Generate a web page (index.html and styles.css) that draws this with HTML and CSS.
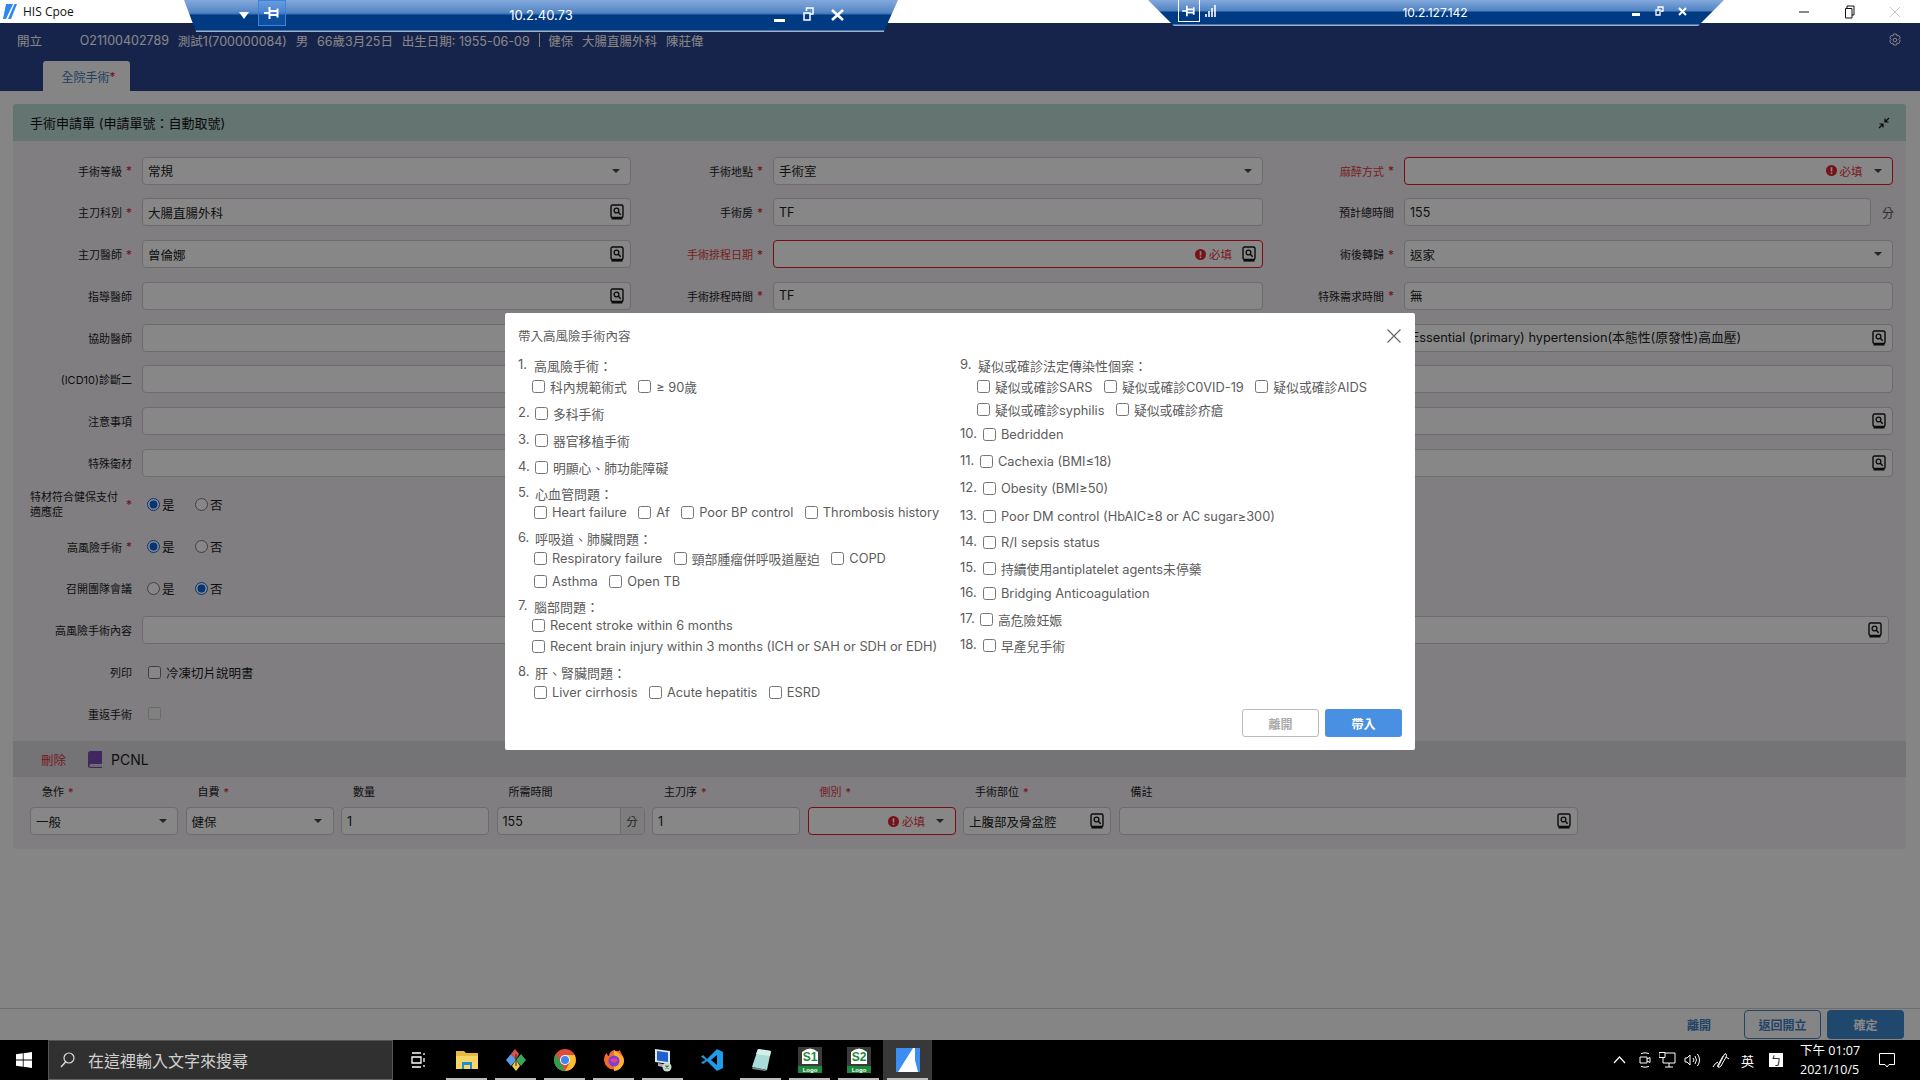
FILE: index.html
```html
<!DOCTYPE html>
<html lang="zh-Hant">
<head>
	<meta charset="UTF-8">
	<title>HIS Cpoe</title>
	<link rel="stylesheet" href="styles.css">
</head>
<body>
<svg class="defs" width="0" height="0">
	<symbol id="lookup" viewBox="0 0 14 16">
		<rect x="1" y="1" width="12" height="12.5" rx="1.5" fill="none" stroke="#151515" stroke-width="1.4"/>
		<path d="M1.5 14.8h11" stroke="#151515" stroke-width="1.6"/>
		<circle cx="6.5" cy="6.5" r="2.4" fill="none" stroke="#151515" stroke-width="1.3"/>
		<path d="M8.3 8.3l2.4 2.4" stroke="#151515" stroke-width="1.5"/>
	</symbol>
	<symbol id="pin" viewBox="0 0 16 14">
		<path d="M0 7h6M5.500 1v12M5 5h9M5 9h9M13.500 2.500v9" fill="none" stroke="#fff" stroke-width="2"/>
	</symbol>
	<symbol id="must" viewBox="0 0 12 12">
		<circle cx="6" cy="6" r="6" fill="#e0232e"/>
		<path d="M6 2.500v4.500M6 8.300v1.400" stroke="#fff" stroke-width="1.800"/>
	</symbol>
</svg>

<div class="titlebar">
	<svg class="app-logo" width="14" height="15" viewBox="0 0 14 15"><path d="M3 0h11L8 15H0z" fill="#2e86f0"/><path d="M10 0h1.500L5 15H3z" fill="#fff"/></svg>
	<span class="app-name">HIS Cpoe</span>
	<div class="win-btns">
		<svg width="12" height="12" viewBox="0 0 12 12"><path d="M1 6h10" stroke="#111"/></svg>
		<svg width="12" height="14" viewBox="0 0 12 14"><path d="M3 3.500V1h7v9H8M1.500 3.500h6.500v9.500H1.500z" fill="none" stroke="#111"/></svg>
		<svg width="12" height="12" viewBox="0 0 12 12"><path d="M1 1l10 10M11 1L1 11" stroke="#c9c9c9"/></svg>
	</div>
</div>

<div class="main">
	<div class="top">
		<div class="patient">
			<span class="open-tag">開立</span>
			<span>O21100402789</span><span>測試1(700000084)</span><span>男</span><span>66歲3月25日</span><span>出生日期: 1955-06-09</span><span class="sep"></span><span>健保</span><span>大腸直腸外科</span><span>陳莊偉</span>
			<svg class="gear" width="14" height="15" viewBox="0 0 14 15"><path d="M5.500 1h3l.5 2 1.800-.6 1.500 2.600-1.400 1.500 1.400 1.500-1.500 2.600-1.800-.6-.5 2H5.500l-.5-2-1.800.6L1.700 8l1.400-1.500L1.700 5l1.500-2.600L5 3z" fill="none" stroke="#fff"/><circle cx="7" cy="7" r="1.800" fill="none" stroke="#fff"/></svg>
		</div>
		<div class="tab">全院手術<em>*</em></div>
	</div>

	<div class="page">
		<div class="panel">
			<div class="panel-head">
				<span>手術申請單 (申請單號：自動取號)</span>
				<svg class="shrink" width="12" height="12" viewBox="0 0 12 12"><path d="M11 1L7.500 4.500M7 1.500V5h3.500M1 11l3.500-3.500M1.500 7H5v3.500" fill="none" stroke="#111" stroke-width="1.200"/></svg>
			</div>

			<div class="form">
				<label class="lb req">手術等級</label>
				<div class="field"><span class="val">常規</span><i class="arrow"></i></div>
				<label class="lb req">手術地點</label>
				<div class="field"><span class="val">手術室</span><i class="arrow"></i></div>
				<label class="lb req bad">麻醉方式</label>
				<div class="field error"><span class="must"><svg width="11" height="11"><use href="#must"/></svg>必填</span><i class="arrow"></i></div>

				<label class="lb req">主刀科別</label>
				<div class="field"><span class="val">大腸直腸外科</span><svg class="look"><use href="#lookup"/></svg></div>
				<label class="lb req">手術房</label>
				<div class="field"><span class="val">TF</span></div>
				<label class="lb">預計總時間</label>
				<div class="with-unit"><div class="field"><span class="val">155</span></div><span class="unit">分</span></div>

				<label class="lb req">主刀醫師</label>
				<div class="field"><span class="val">曾倫娜</span><svg class="look"><use href="#lookup"/></svg></div>
				<label class="lb req bad">手術排程日期</label>
				<div class="field error"><span class="must"><svg width="11" height="11"><use href="#must"/></svg>必填</span><svg class="look"><use href="#lookup"/></svg></div>
				<label class="lb req">術後轉歸</label>
				<div class="field"><span class="val">返家</span><i class="arrow"></i></div>

				<label class="lb">指導醫師</label>
				<div class="field"><svg class="look"><use href="#lookup"/></svg></div>
				<label class="lb req">手術排程時間</label>
				<div class="field"><span class="val">TF</span></div>
				<label class="lb req">特殊需求時間</label>
				<div class="field"><span class="val">無</span></div>

				<label class="lb">協助醫師</label>
				<div class="field"></div>
				<label class="lb"></label>
				<div class="field"></div>
				<label class="lb">(ICD10)診斷一</label>
				<div class="field"><span class="val en">Essential (primary) hypertension(本態性(原發性)高血壓)</span><svg class="look"><use href="#lookup"/></svg></div>

				<label class="lb">(ICD10)診斷二</label>
				<div class="field wide"></div>

				<label class="lb">注意事項</label>
				<div class="field wide"><svg class="look"><use href="#lookup"/></svg></div>

				<label class="lb">特殊衛材</label>
				<div class="field wide"><svg class="look"><use href="#lookup"/></svg></div>

				<label class="lb req two"><span>特材符合健保支付適應症</span></label>
				<div class="opts">
					<label class="opt"><input type="radio" name="r1" checked>是</label>
					<label class="opt"><input type="radio" name="r1">否</label>
				</div>
				<span class="rest"></span>

				<label class="lb req">高風險手術</label>
				<div class="opts">
					<label class="opt"><input type="radio" name="r2" checked>是</label>
					<label class="opt"><input type="radio" name="r2">否</label>
				</div>
				<span class="rest"></span>

				<label class="lb">召開團隊會議</label>
				<div class="opts">
					<label class="opt"><input type="radio" name="r3">是</label>
					<label class="opt"><input type="radio" name="r3" checked>否</label>
				</div>
				<span class="rest"></span>

				<label class="lb">高風險手術內容</label>
				<div class="field wide inset"><svg class="look"><use href="#lookup"/></svg></div>

				<label class="lb">列印</label>
				<div class="opts box"><label class="opt print"><input type="checkbox">冷凍切片說明書</label></div>
				<span class="rest"></span>

				<label class="lb">重返手術</label>
				<div class="opts box"><input type="checkbox" disabled></div>
				<span class="rest"></span>
			</div>

			<div class="item-bar">
				<span class="del">刪除</span>
				<svg class="book" width="14" height="17" viewBox="0 0 14 17"><path d="M2.500 0H14v13H3a1.500 1.500 0 0 0 0 3h11v1H2.500A2.500 2.500 0 0 1 0 14.500v-12A2.500 2.500 0 0 1 2.500 0z" fill="#7a4bb5"/><path d="M3 13.500h11V16H3a1.300 1.300 0 0 1 0-2.500z" fill="#c9c9d2"/></svg>
				<span class="item-name">PCNL</span>
			</div>

			<div class="item-row">
				<div class="cell"><span class="cap">急作<em>*</em></span><div class="field"><span class="val">一般</span><i class="arrow"></i></div></div>
				<div class="cell"><span class="cap">自費<em>*</em></span><div class="field"><span class="val">健保</span><i class="arrow"></i></div></div>
				<div class="cell"><span class="cap">數量</span><div class="field"><span class="val">1</span></div></div>
				<div class="cell"><span class="cap">所需時間</span><div class="field addon-wrap"><span class="val">155</span><span class="addon">分</span></div></div>
				<div class="cell"><span class="cap">主刀序<em>*</em></span><div class="field"><span class="val">1</span></div></div>
				<div class="cell"><span class="cap bad">側別<em>*</em></span><div class="field error"><span class="must"><svg width="11" height="11"><use href="#must"/></svg>必填</span><i class="arrow"></i></div></div>
				<div class="cell"><span class="cap">手術部位<em>*</em></span><div class="field"><span class="val">上腹部及骨盆腔</span><svg class="look"><use href="#lookup"/></svg></div></div>
				<div class="cell"><span class="cap">備註</span><div class="field"><svg class="look"><use href="#lookup"/></svg></div></div>
			</div>
		</div>
	</div>

	<div class="actions">
		<span class="link">離開</span>
		<button class="btn-line">返回開立</button>
		<button class="btn-solid">確定</button>
	</div>

	<div class="mask"></div>

	<div class="modal">
		<div class="modal-title">帶入高風險手術內容</div>
		<svg class="modal-x" width="14" height="14" viewBox="0 0 14 14"><path d="M.5.500l13 13M13.500.500l-13 13" stroke="#666" stroke-width="1.200"/></svg>
		<div class="modal-cols">
			<div class="col-l">
				<div class="ln"><b class="no">1.</b><span>高風險手術：</span></div>
				<div class="ln sub mt3 in1"><label class="ck"><input type="checkbox">科內規範術式</label><label class="ck"><input type="checkbox">≥ 90歲</label></div>
				<div class="ln mt9"><b class="no">2.</b><label class="ck in2"><input type="checkbox">多科手術</label></div>
				<div class="ln mt9"><b class="no">3.</b><label class="ck in2"><input type="checkbox">器官移植手術</label></div>
				<div class="ln mt9"><b class="no">4.</b><label class="ck in2"><input type="checkbox">明顯心、肺功能障礙</label></div>
				<div class="ln mt8"><b class="no">5.</b><span class="in2">心血管問題：</span></div>
				<div class="ln sub mt1 in2"><label class="ck"><input type="checkbox">Heart failure</label><label class="ck"><input type="checkbox">Af</label><label class="ck"><input type="checkbox">Poor BP control</label><label class="ck"><input type="checkbox">Thrombosis history</label></div>
				<div class="ln mt8"><b class="no">6.</b><span class="in2">呼吸道、肺臟問題：</span></div>
				<div class="ln sub mt2 in2"><label class="ck"><input type="checkbox">Respiratory failure</label><label class="ck"><input type="checkbox">頸部腫瘤併呼吸道壓迫</label><label class="ck"><input type="checkbox">COPD</label></div>
				<div class="ln sub mt5 in2"><label class="ck"><input type="checkbox">Asthma</label><label class="ck"><input type="checkbox">Open TB</label></div>
				<div class="ln mt7"><b class="no">7.</b><span>腦部問題：</span></div>
				<div class="ln sub mt1 in1"><label class="ck"><input type="checkbox">Recent stroke within 6 months</label></div>
				<div class="ln sub mt3 in1"><label class="ck"><input type="checkbox">Recent brain injury within 3 months (ICH or SAH or SDH or EDH)</label></div>
				<div class="ln mt8"><b class="no">8.</b><span class="in2">肝、腎臟問題：</span></div>
				<div class="ln sub mt2 in2"><label class="ck"><input type="checkbox">Liver cirrhosis</label><label class="ck"><input type="checkbox">Acute hepatitis</label><label class="ck"><input type="checkbox">ESRD</label></div>
			</div>
			<div class="col-r">
				<div class="ln"><b class="no head">9.</b><span>疑似或確診法定傳染性個案：</span></div>
				<div class="ln sub mt3 in3"><label class="ck"><input type="checkbox">疑似或確診SARS</label><label class="ck"><input type="checkbox">疑似或確診C0VID-19</label><label class="ck"><input type="checkbox">疑似或確診AIDS</label></div>
				<div class="ln sub mt5 in3"><label class="ck"><input type="checkbox">疑似或確診syphilis</label><label class="ck"><input type="checkbox">疑似或確診疥瘡</label></div>
				<div class="ln mt7"><b class="no">10.</b><label class="ck"><input type="checkbox">Bedridden</label></div>
				<div class="ln mt9"><b class="no tight">11.</b><label class="ck"><input type="checkbox">Cachexia (BMI≤18)</label></div>
				<div class="ln mt9"><b class="no">12.</b><label class="ck"><input type="checkbox">Obesity (BMI≥50)</label></div>
				<div class="ln mt10"><b class="no">13.</b><label class="ck"><input type="checkbox">Poor DM control (HbAIC≥8 or AC sugar≥300)</label></div>
				<div class="ln mt8"><b class="no">14.</b><label class="ck"><input type="checkbox">R/I sepsis status</label></div>
				<div class="ln mt8"><b class="no">15.</b><label class="ck"><input type="checkbox">持續使用antiplatelet agents未停藥</label></div>
				<div class="ln mt7"><b class="no">16.</b><label class="ck"><input type="checkbox">Bridging Anticoagulation</label></div>
				<div class="ln mt8"><b class="no tight">17.</b><label class="ck"><input type="checkbox">高危險妊娠</label></div>
				<div class="ln mt8"><b class="no">18.</b><label class="ck"><input type="checkbox">早產兒手術</label></div>
			</div>
		</div>
		<div class="modal-foot">
			<button class="m-close">離開</button>
			<button class="m-ok">帶入</button>
		</div>
	</div>
</div>

<!-- remote desktop connection bars -->
<div class="rdp rdp1">
	<svg class="rdp-arrow" width="10" height="7" viewBox="0 0 10 7"><path d="M0 0h10L5 7z" fill="#fff"/></svg>
	<span class="rdp-pin"><svg width="16" height="14"><use href="#pin"/></svg></span>
	<span class="rdp-ip">10.2.40.73</span>
	<svg class="rdp-min" width="11" height="3"><path d="M0 1.500h11" stroke="#fff" stroke-width="3"/></svg>
	<svg class="rdp-max" width="11" height="14" viewBox="0 0 11 14"><path d="M3.500 4V1h6.500v6H7M1 6h6v7H1z" fill="none" stroke="#fff" stroke-width="1.500"/></svg>
	<svg class="rdp-x" width="13" height="12" viewBox="0 0 13 12"><path d="M1 1l11 10M12 1L1 11" stroke="#fff" stroke-width="2.600"/></svg>
</div>
<div class="rdp rdp2">
	<span class="rdp-pin"><svg width="14" height="12"><use href="#pin"/></svg></span>
	<svg class="rdp-signal" width="12" height="12" viewBox="0 0 12 12"><path d="M1 12V9M4 12V6M7 12V3M10 12V0" stroke="#fff" stroke-width="1.600"/></svg>
	<span class="rdp-ip">10.2.127.142</span>
	<svg class="rdp-min" width="8" height="3"><path d="M0 1.500h8" stroke="#fff" stroke-width="3"/></svg>
	<svg class="rdp-max" width="9" height="10" viewBox="0 0 9 10"><path d="M3 3V1h5v4H6M1 4h4v5H1z" fill="none" stroke="#fff" stroke-width="1.300"/></svg>
	<svg class="rdp-x" width="9" height="9" viewBox="0 0 9 9"><path d="M1 1l7 7M8 1L1 8" stroke="#fff" stroke-width="2"/></svg>
</div>

<div class="taskbar">
	<div class="start"><svg width="16" height="16" viewBox="0 0 16 16"><path d="M0 2.300l6.800-1v6.300H0zM7.600 1.200L16 0v7.600H7.600zM0 8.400h6.800v6.300L0 13.700zM7.600 8.400H16V16l-8.400-1.200z" fill="#fff"/></svg></div>
	<div class="search">
		<svg width="15" height="16" viewBox="0 0 15 16"><circle cx="9" cy="6" r="5" fill="none" stroke="#ddd" stroke-width="1.200"/><path d="M5.500 10L1 15" stroke="#ddd" stroke-width="1.400"/></svg>
		<span>在這裡輸入文字來搜尋</span>
	</div>
	<div class="tasks">
		<div class="task"><svg width="16" height="16" viewBox="0 0 16 16"><path d="M2 1h9M2 15h9M2 5h9v6H2zM14 1v2M14 6v4M14 13v2" fill="none" stroke="#fff" stroke-width="1.300"/></svg></div>
		<div class="task run"><svg width="22" height="20" viewBox="0 0 22 20"><path d="M0 1h8l2 2h12v16H0z" fill="#e8b83f"/><path d="M0 6h22v13H0z" fill="#fbd564"/><path d="M6 12h10v7h-2v-4H8v4H6z" fill="#1c8fd6"/></svg></div>
		<div class="task run"><svg width="22" height="24" viewBox="0 0 22 24"><path d="M11 12L6 6l4-5 4 5z" fill="#d9534f"/><path d="M11 12l-5 6-5-6 5-6z" fill="#5b9be8"/><path d="M11 12l5-6 5 6-5 6z" fill="#3ba55d"/><path d="M11 12l4 6-4 5-4-5z" fill="#f2cc47"/><path d="M11 6v12" stroke="#222"/></svg></div>
		<div class="task run"><svg width="22" height="22" viewBox="0 0 22 22"><circle cx="11" cy="11" r="11" fill="#dd4b3e"/><path d="M11 6h9.600A11 11 0 0 1 11 22l4.500-8z" fill="#fbc02d"/><path d="M11 22A11 11 0 0 1 1.800 5l5 9z" fill="#2f9e4f"/><circle cx="11" cy="11" r="5" fill="#fff"/><circle cx="11" cy="11" r="4" fill="#4285f4"/></svg></div>
		<div class="task run"><svg width="22" height="24" viewBox="0 0 22 24"><path d="M11 2c3 2 5 1 6 0 0 2 3 5 4 9a10 10 0 1 1-20 1C1 9 2 6 4 5c0 2 1 3 2 3 0-3 2-5 5-6z" fill="#f56a2c"/><path d="M11 2c4 3 10 6 10 11 0 5-5 10-10 10z" fill="#ffb02e"/><circle cx="11" cy="13" r="5.500" fill="#7a3fd1"/><path d="M7 12c2-2 6-2 8 0-1 3-6 4-8 0z" fill="#e33fa0"/></svg></div>
		<div class="task run"><svg width="22" height="24" viewBox="0 0 22 24"><path d="M3 1l15 2v13L3 14z" fill="#dfe6f2"/><path d="M5 3l11 1.500v9.500L5 12.500z" fill="#1f5fd0"/><path d="M6 15l9 2v3l-9-2z" fill="#aab"/><circle cx="15" cy="19" r="4.500" fill="#cfd8cf"/><path d="M13.500 17.500l3 3M16.500 17.500l-3 3" stroke="#2a7a3a" stroke-width="1.200"/></svg></div>
		<div class="task"><svg width="24" height="24" viewBox="0 0 24 24"><path d="M17 1l6 3v16l-6 3L7 13l-4 3-2-1.500L5.500 12 1 8.500 3 7l4 4z" fill="#1f9be8"/><path d="M17 7v10l-6-5z" fill="#000"/></svg></div>
		<div class="task run"><svg width="22" height="24" viewBox="0 0 22 24"><path d="M8 1l13 2-4 19-15-3z" fill="#a9dcd8"/><path d="M8 1l13 2-1 5L6 6z" fill="#d7eeea"/><path d="M3 19l14 3-2 1-13-2z" fill="#6a8c8a"/></svg></div>
		<div class="task run"><svg width="24" height="26" viewBox="0 0 24 26"><path d="M0 0h24v26H0z" fill="#3a3a3a"/><path d="M4 5q8-7 16 0v12H4z" fill="#fff"/><text class="logo-s" x="12" y="14" fill="#1c8a3c">S1</text><path d="M0 19h24v7H0z" fill="#1c8a3c"/><text class="logo-t" x="12" y="25" fill="#fff">Logo</text></svg></div>
		<div class="task run"><svg width="24" height="26" viewBox="0 0 24 26"><path d="M0 0h24v26H0z" fill="#3a3a3a"/><path d="M4 5q8-7 16 0v12H4z" fill="#fff"/><text class="logo-s" x="12" y="14" fill="#1c8a3c">S2</text><path d="M0 19h24v7H0z" fill="#1c8a3c"/><text class="logo-t" x="12" y="25" fill="#fff">Logo</text></svg></div>
		<div class="task run on"><svg width="24" height="24" viewBox="0 0 24 24"><path d="M0 0h24v24H0z" fill="#3b8df2"/><path d="M17 0h2v24H2z" fill="#fff"/><path d="M17 4l5 20h-5z" fill="#fff"/></svg></div>
	</div>
	<div class="tray">
		<svg class="t1" width="13" height="8" viewBox="0 0 13 8"><path d="M1 7l5.500-6L12 7" fill="none" stroke="#fff" stroke-width="1.200"/></svg>
		<svg class="t2" width="12" height="16" viewBox="0 0 12 16"><path d="M2 1.500Q6 0 10 1.500M2 14.500q4 1.500 8 0M1 5h7v6H1zM8 7l3-1.500v5L8 9" fill="none" stroke="#fff"/></svg>
		<svg class="t3" width="17" height="16" viewBox="0 0 17 16"><path d="M4 1h12v10H4zM10 11v4M6 15h8" fill="none" stroke="#fff"/><path d="M0 .500h6v5H0z" fill="#000" stroke="#fff"/></svg>
		<svg class="t4" width="17" height="14" viewBox="0 0 17 14"><path d="M1 5h2l3-3v10L3 9H1zM9 5q2 2 0 4M11 3q3 4 0 8M13.500 1q4 6 0 12" fill="none" stroke="#fff"/></svg>
		<svg class="t5" width="18" height="16" viewBox="0 0 18 16"><path d="M6 15L12 3q1-2 2-1t0 3L9 14q-2 2-3 1-1-1 0-2l5-9M1 15q2-4 5-5M14 5l3 2" fill="none" stroke="#fff"/></svg>
		<span class="t6">英</span>
		<span class="t7">ㄅ</span>
		<div class="clock"><span>下午 01:07</span><span>2021/10/5</span></div>
		<svg class="t8" width="16" height="15" viewBox="0 0 16 15"><path d="M.5.500h15v11H10l-2 2.500-2-2.500H.5z" fill="none" stroke="#fff"/></svg>
	</div>
</div>
</body>
</html>
```

FILE: styles.css
```css
*{
	margin:0;
	padding:0;
	box-sizing:border-box;
}
html,body{
	width:1920px;
	height:1080px;
	overflow:hidden;
}
body{
	display:flex;
	flex-direction:column;
	position:relative;
	font-family:Inter,"Noto Sans CJK TC",sans-serif;
	font-size:13px;
	color:#333;
	background:#fff;
}
.defs{position:absolute;}
em{font-style:normal;color:#e02020;}
button{font-family:inherit;cursor:pointer;}

/* window title */
.titlebar{
	height:23px;
	flex:none;
	display:flex;
	align-items:center;
	background:#fff;
	padding-left:3px;
}
.app-logo{margin-right:6px;}
.app-name{font-size:12px;font-family:"Open Sans","Noto Sans CJK TC",sans-serif;color:#111;}
.win-btns{
	margin-left:auto;
	width:122px;
	display:flex;
	justify-content:space-between;
	align-items:center;
	padding-right:19px;
}

/* main */
.main{
	position:relative;
	flex:1;
	display:flex;
	flex-direction:column;
	min-height:0;
	background:#fdfbfd;
}
.top{
	height:68px;
	flex:none;
	background:#2a4490;
	display:flex;
	flex-direction:column;
	justify-content:space-between;
}
.patient{
	height:34px;
	display:flex;
	align-items:center;
	gap:8.800px;
	padding-left:17px;
	padding-right:18px;
	color:#fff;
	font-size:12.5px;
}
.open-tag{width:54px;flex:none;}
.sep{width:1px;height:14px;background:#fff;}
.gear{margin-left:auto;}
.tab{
	height:30px;
	width:87px;
	margin-left:43px;
	padding-left:4px;
	background:#fdfbfd;
	border-radius:3px 3px 0 0;
	display:flex;
	align-items:center;
	justify-content:center;
	font-size:12px;
	color:#3f77b4;
}
.page{
	flex:1;
	padding:13px 14px 0 13px;
}
.panel{
	background:#f1eef3;
	border-radius:3px;
}
.panel-head{
	height:37px;
	background:#bcdcd6;
	border-radius:3px 3px 0 0;
	display:flex;
	align-items:center;
	justify-content:space-between;
	padding:0 16px 0 17px;
	color:#111;
	font-size:13px;
}

/* form */
.form{
	display:grid;
	grid-template-columns:129px 489px 142px 490px 141px 489px;
	grid-auto-rows:28px;
	row-gap:13.8px;
	padding:15.500px 0 13.500px;
}
.lb{
	display:flex;
	align-items:center;
	justify-content:flex-end;
	padding-right:10px;
	font-size:11px;
	color:#1c1c1c;
}
.lb.req::after{
	content:"*";
	color:#d8232e;
	margin-left:4px;
	font-size:12px;
}
.lb.bad{color:#e23a40;}
.lb.two{line-height:15px;}
.lb.two span{width:92px;flex:none;}
.field{
	display:flex;
	align-items:center;
	height:28px;
	background:#fff;
	border:1px solid #cfcbd0;
	border-radius:4px;
	padding:0 6px 0 5px;
	font-size:12.5px;
	color:#222;
	min-width:0;
	overflow:hidden;
}
.field.wide{grid-column:2 / 7;}
.field.inset{margin-right:4px;}
.field.error{border-color:#e8172a;}
.val{white-space:nowrap;}
.val.en{font-size:12.8px;margin:-2px 0 0 1.500px;}
.look{
	width:14px;
	height:16px;
	margin-left:auto;
	flex:none;
}
.arrow{
	width:0;
	height:0;
	margin-left:auto;
	margin-right:4.500px;
	border-left:4px solid transparent;
	border-right:4px solid transparent;
	border-top:4px solid #444;
	flex:none;
}
.must{
	margin-left:auto;
	display:flex;
	align-items:center;
	gap:3px;
	font-size:11.5px;
	color:#e8323c;
}
.must + .arrow{margin-left:11px;}
.must + .look{margin-left:10px;}
.with-unit{display:flex;align-items:center;}
.with-unit .field{width:467px;flex:none;}
.unit{font-size:12px;color:#555;width:13px;margin-left:11px;}
.opts{
	display:flex;
	align-items:center;
	padding-left:5px;
}
.opts.box{padding-left:6px;}
.opt{
	width:48px;
	display:flex;
	align-items:center;
	gap:2px;
	font-size:12.5px;
	color:#1c1c1c;
}
.opt input{margin:0;width:13px;height:13px;accent-color:#0b62e0;}
.opt.print{width:auto;gap:5px;}
.opts input[disabled]{margin:0;width:13px;height:13px;}
.rest{grid-column:3 / 7;}

/* item row */
.item-bar{
	height:36px;
	background:#dcd9de;
	display:flex;
	align-items:center;
	padding-left:28px;
}
.del{font-size:12.5px;color:#e2333c;margin-right:22px;}
.book{margin-right:9px;}
.item-name{font-size:14px;color:#1c1c1c;}
.item-row{
	display:grid;
	grid-template-columns:repeat(7,148px) 459px;
	column-gap:7.5px;
	padding:7px 0 14px 17px;
}
.cell{display:flex;flex-direction:column;gap:7px;}
.cap{
	height:16px;
	line-height:16px;
	padding-left:12px;
	font-size:11px;
	color:#1c1c1c;
}
.cap em{margin-left:4px;}
.cap.bad{color:#e23a40;}
.addon-wrap{padding-right:0;}
.addon{
	margin-left:auto;
	width:24px;
	height:100%;
	display:flex;
	align-items:center;
	justify-content:center;
	background:#eeecef;
	border-left:1px solid #cfcbd0;
	font-size:11.5px;
	color:#444;
}

/* footer */
.actions{
	height:32px;
	flex:none;
	border-top:1px solid #cfccd1;
	display:flex;
	align-items:center;
	justify-content:flex-end;
	gap:6px;
	padding-right:16px;
	font-size:12px;
	font-weight:600;
	color:#3d7fc4;
}
.link{margin-right:27px;}
.actions button{
	width:77px;
	height:29px;
	border-radius:4px;
	font-size:12px;
	font-weight:600;
}
.btn-line{background:transparent;border:1px solid #3d7fc4;color:#3d7fc4;}
.btn-solid{background:#3d86cc;border:0;color:#fff;}

/* mask + modal */
.mask{
	position:absolute;
	inset:0;
	background:rgba(0,0,0,.47);
}
.modal{
	position:absolute;
	left:505px;
	top:290px;
	width:910px;
	height:437px;
	background:#fff;
	border-radius:2px;
	color:#5c5c5c;
	font-size:13px;
}
.modal-title{
	position:absolute;
	left:13px;
	top:14px;
	font-size:12.5px;
	line-height:20px;
}
.modal-x{position:absolute;right:14px;top:16px;}
.modal-cols{
	position:absolute;
	left:13px;
	top:43px;
	display:flex;
}
.col-l{width:442px;}
.ln{
	display:flex;
	align-items:center;
	height:18px;
	white-space:nowrap;
}
.no{
	font-weight:400;
	width:16px;
	flex:none;
	margin-top:-2px;
}
.col-r .no{width:23px;}
.col-r .no.tight{width:20px;}
.col-r .no.head{width:18px;}
.sub{gap:11.500px;}
.ck{display:flex;align-items:center;gap:5px;font-size:12.8px;}
.ck input{margin:0;width:13px;height:13px;flex:none;}
.in1{padding-left:14px;}
.in2{padding-left:1px;}
.sub.in2{padding-left:16px;}
.in3{padding-left:17px;}
.mt1{margin-top:1px;}
.mt2{margin-top:2px;}
.mt3{margin-top:3px;}
.mt5{margin-top:5px;}
.mt6{margin-top:6px;}
.mt7{margin-top:7px;}
.mt8{margin-top:8px;}
.mt9{margin-top:9px;}
.mt10{margin-top:10px;}
.modal-foot{
	position:absolute;
	right:13px;
	bottom:13px;
	display:flex;
	gap:6px;
}
.modal-foot button{
	width:77px;
	height:28px;
	border-radius:3px;
	font-size:12px;
}
.m-close{background:#fff;border:1px solid #bbb;color:#aaa;font-weight:600;}
.m-ok{background:#4a90e2;border:0;color:#fff;font-weight:600;}

/* remote bars */
.rdp{
	position:absolute;
	top:0;
	display:flex;
	align-items:center;
	color:#fff;
}
.rdp1{
	left:184px;
	width:714px;
	height:32px;
	clip-path:polygon(0 0,100% 0,98% 100%,1.7% 100%);
	background:linear-gradient(#83a9dc,#5687c5 12px,#3d73b6 14px,#003a82 15px,#003a82 30px,#9fb2cd 31px);
	font-size:13px;
}
.rdp2{
	left:1148px;
	width:576px;
	height:26px;
	clip-path:polygon(0 0,100% 0,95.500% 100%,4.500% 100%);
	background:linear-gradient(#83a9dc,#4f82c2 11px,#003a82 12px,#003a82 24px,#9fb2cd 25px);
	font-size:12px;
}
.rdp-arrow{position:absolute;left:55px;top:12px;}
.rdp-pin{
	position:absolute;
	display:flex;
	align-items:center;
	justify-content:center;
}
.rdp1 .rdp-pin{left:74px;top:0;width:28px;height:26px;background:rgba(50,130,230,.3);border:1px solid #3c82d8;}
.rdp2 .rdp-pin{left:30px;top:0;width:22px;height:22px;border:1px solid #fff;border-top:0;}
.rdp-signal{position:absolute;left:57px;top:5px;}
.rdp-ip{position:absolute;left:0;right:0;text-align:center;}
.rdp1 .rdp-ip{top:7px;}
.rdp2 .rdp-ip{top:5px;left:-2px;}
.rdp1 .rdp-min{position:absolute;left:590px;top:19px;}
.rdp1 .rdp-max{position:absolute;left:619px;top:7px;}
.rdp1 .rdp-x{position:absolute;left:647px;top:9px;}
.rdp2 .rdp-min{position:absolute;left:484px;top:13px;}
.rdp2 .rdp-max{position:absolute;left:507px;top:6px;}
.rdp2 .rdp-x{position:absolute;left:530px;top:7px;}

/* taskbar */
.taskbar{
	height:40px;
	flex:none;
	background:#000;
	display:flex;
	align-items:stretch;
	color:#fff;
}
.start{
	width:48px;
	display:flex;
	align-items:center;
	justify-content:center;
}
.search{
	width:345px;
	background:#303030;
	border:1px solid #555;
	border-bottom-color:#666;
	display:flex;
	align-items:center;
	gap:13px;
	padding-left:11px;
	font-family:"Noto Sans CJK TC",sans-serif;
	font-size:16px;
	color:#d0d0d0;
}
.tasks{display:flex;}
.task{
	width:49px;
	position:relative;
	display:flex;
	align-items:center;
	justify-content:center;
}
.task.run::after{
	content:"";
	position:absolute;
	left:4px;
	right:4px;
	bottom:0;
	height:2px;
	background:#bdbdbd;
}
.task.on{background:#383838;}
.logo-s{font:700 12px "Liberation Sans",sans-serif;text-anchor:middle;}
.logo-t{font:700 6px "Liberation Sans",sans-serif;text-anchor:middle;}
.tray{
	margin-left:auto;
	display:flex;
	align-items:center;
	padding-right:25px;
}
.t1{margin-right:13px;}
.t2{margin-right:8px;}
.t3{margin-right:8px;}
.t4{margin-right:11px;}
.t5{margin-right:11px;}
.t6{font-family:"Noto Sans CJK TC",sans-serif;font-size:13px;margin-right:15px;}
.t7{
	width:14px;
	height:14px;
	background:#fff;
	color:#000;
	font-family:"Noto Sans CJK TC",sans-serif;
	font-size:11px;
	line-height:14px;
	text-align:center;
	margin-right:17px;
}
.clock{
	display:flex;
	flex-direction:column;
	gap:3px;
	width:62px;
	font-size:12.5px;
	line-height:16px;
	font-family:"Open Sans","Noto Sans CJK TC",sans-serif;
	margin-right:17px;
	white-space:nowrap;
}
```
